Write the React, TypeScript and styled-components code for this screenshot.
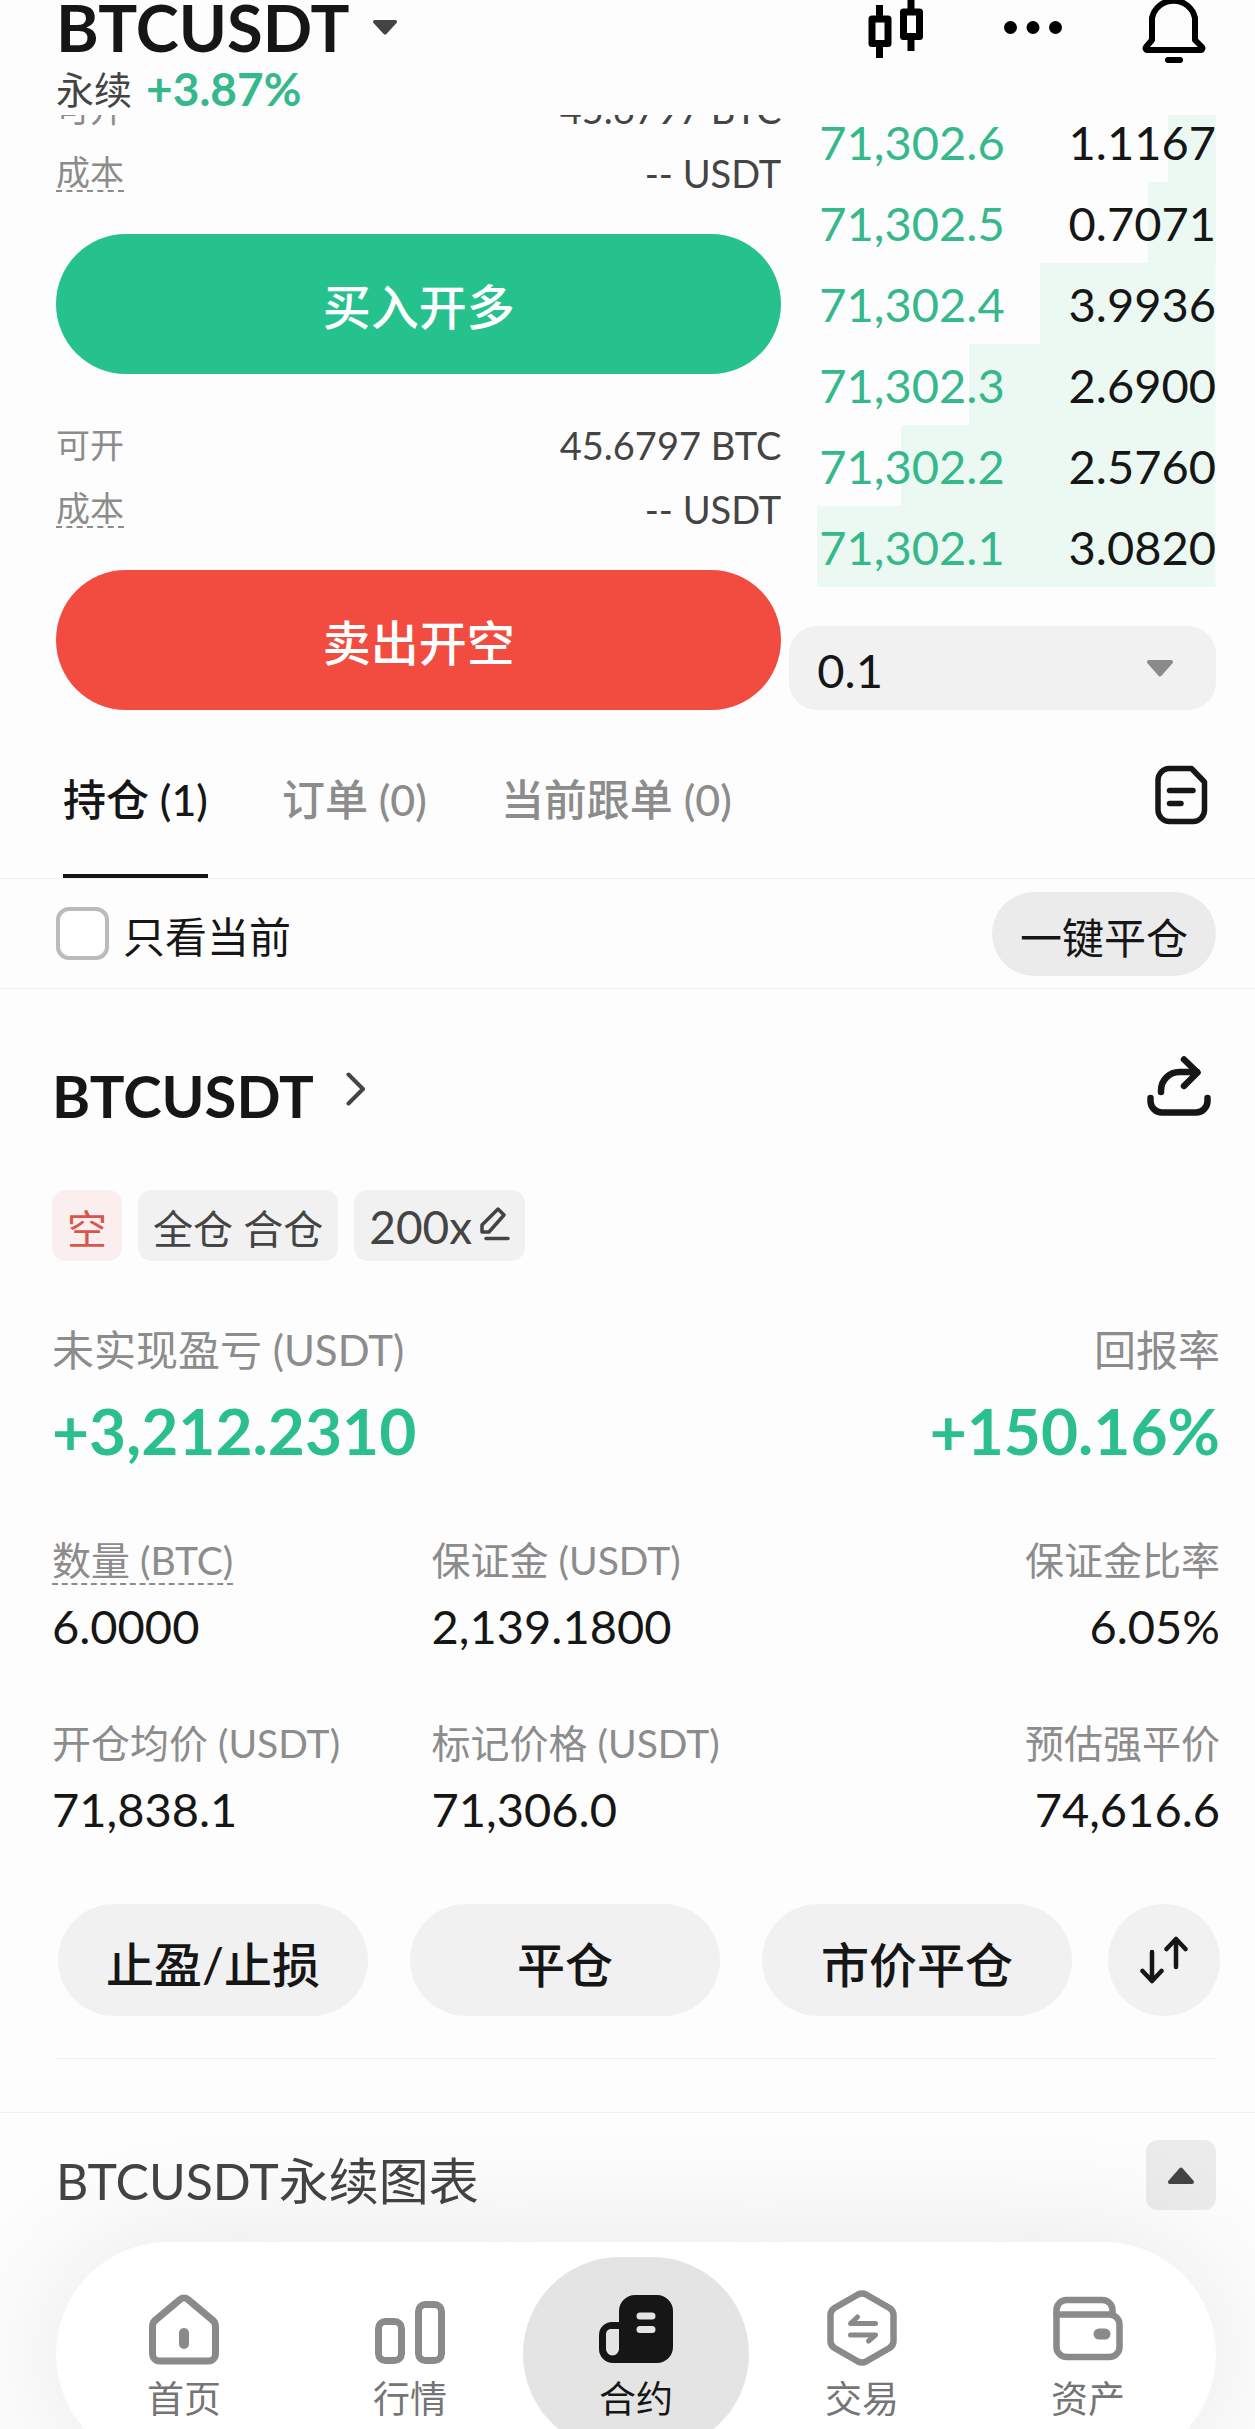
import React from 'react';
import styled, { createGlobalStyle, css } from 'styled-components';

const color = {
  page: '#fdfdfd',
  ink: '#161616',
  body: '#444444',
  muted: '#8c8c8c',
  line: '#efefef',
  fill: '#f1f1f1',
  fillStrong: '#ebebeb',
  green: '#26c28e',
  greenText: '#35b88c',
  greenBold: '#2bbe8e',
  greenWash: '#ecf9f2',
  red: '#f24c40',
  redText: '#d8564a',
  redWash: '#fbeeee',
};

const GlobalStyle = createGlobalStyle`
  *, *::before, *::after { box-sizing: border-box; }
  body { margin: 0; background: ${color.page}; }
  button, select, input { font: inherit; color: inherit; margin: 0; }
  button { border: 0; padding: 0; background: none; cursor: pointer; }
  a { color: inherit; text-decoration: none; }
  h1, h2, p, dl, dd, dt { margin: 0; font-weight: inherit; }
  svg { display: block; flex: none; }
`;

const Screen = styled.div`
  height: 100vh;
  display: flex;
  flex-direction: column;
  overflow: hidden;
  background: ${color.page};
  color: ${color.ink};
  font-family: Lato, 'Noto Sans CJK SC', sans-serif;
  font-size: 42px;
`;

/* ---------- header ---------- */

const Header = styled.header`
  flex: none;
  height: 115px;
  padding: 0 49px 0 56px;
  display: flex;
  justify-content: space-between;
  align-items: flex-start;
`;

const PairButton = styled.button`
  display: flex;
  align-items: center;
  gap: 24px;
  height: 54px;
  font-size: 65px;
  line-height: 54px;
  font-weight: 700;
`;

const PairMeta = styled.p`
  display: flex;
  gap: 14px;
  height: 61px;
  padding-top: 7px;
  font-size: 38px;
  line-height: 56px;
  color: ${color.body};
`;

const Change = styled.strong`
  font-size: 46px;
  font-weight: 700;
  color: ${color.greenText};
`;

const HeaderActions = styled.div`
  display: flex;
  align-items: flex-start;
  gap: 80px;
`;

const IconButton = styled.button`
  display: block;
  flex: none;
`;

/* ---------- scrolled content ---------- */

const Content = styled.main`
  flex: 1;
  min-height: 0;
  overflow: hidden;
`;

const Trade = styled.section`
  margin-top: -38px;
  padding: 0 39px 0 56px;
  display: grid;
  grid-template-columns: 17fr 10fr;
  gap: 8px;
`;

const OrderForm = styled.div`
  display: flex;
  flex-direction: column;
  gap: 39px;
`;

const InfoRow = styled.div`
  height: 64px;
  display: flex;
  justify-content: space-between;
  align-items: center;
  line-height: 48px;
`;

const InfoLabel = styled.span<{ $hint?: boolean }>`
  color: ${color.muted};
  font-size: 34px;
  ${(p) => p.$hint && css`border-bottom: 2px dashed ${color.muted}; line-height: 36px;`}
`;

const InfoValue = styled.span`
  color: ${color.body};
  font-size: 38px;
`;

const OrderButton = styled.button<{ $tone: string }>`
  width: 100%;
  height: 140px;
  margin-top: 29px;
  border-radius: 70px;
  background: ${(p) => p.$tone};
  color: #ffffff;
  font-size: 48px;
  font-weight: 500;
`;

const Book = styled.div`
  padding-top: 24px;
  display: flex;
  flex-direction: column;
  justify-content: space-between;
`;

const BookTable = styled.table`
  width: calc(100% - 28px);
  margin-left: 28px;
  border-collapse: collapse;
  font-size: 47px;
  line-height: 56px;
`;

const BookRow = styled.tr<{ $depth: number }>`
  height: 81px;
  background: linear-gradient(${color.greenWash}, ${color.greenWash}) right / ${(p) => p.$depth}% 100% no-repeat;
`;

const Price = styled.td`
  padding: 0 0 0 2px;
  color: ${color.greenText};
`;

const Amount = styled.td`
  padding: 0;
  text-align: right;
`;

const SelectBox = styled.div`
  display: grid;
  align-items: center;
  & > * { grid-area: 1 / 1; }
  svg { justify-self: end; margin-right: 43px; pointer-events: none; }
`;

const StepSelect = styled.select`
  appearance: none;
  width: 100%;
  height: 84px;
  padding: 4px 28px 0;
  border: 0;
  border-radius: 28px;
  background: ${color.fill};
  font-size: 47px;
`;

/* ---------- tabs and filter ---------- */

const TabBar = styled.nav`
  margin-top: 2px;
  padding: 0 47px 0 63px;
  display: flex;
  justify-content: space-between;
  align-items: center;
  border-bottom: 1px solid ${color.line};
`;

const Tabs = styled.div`
  display: flex;
  gap: 74px;
`;

const Tab = styled.button<{ $active?: boolean }>`
  height: 166px;
  padding-top: 8px;
  border-bottom: 4px solid ${(p) => (p.$active ? color.ink : 'transparent')};
  color: ${(p) => (p.$active ? color.ink : color.muted)};
  font-size: 43px;
  font-weight: 500;
`;

const FilterBar = styled.div`
  height: 110px;
  padding: 0 39px 0 56px;
  display: flex;
  justify-content: space-between;
  align-items: center;
  border-bottom: 1px solid ${color.line};
`;

const CheckLabel = styled.label`
  display: flex;
  align-items: center;
  gap: 14px;
  line-height: 56px;
`;

const CheckText = styled.span`
  padding-top: 6px;
`;

const CheckBox = styled.input`
  appearance: none;
  width: 53px;
  height: 53px;
  border: 4px solid #bbbbbb;
  border-radius: 13px;
  background: #ffffff;
  &:checked { background: ${color.ink}; }
`;

const CloseAll = styled.button`
  height: 84px;
  padding: 4px 28px 0;
  border-radius: 42px;
  background: ${color.fillStrong};
`;

/* ---------- position card ---------- */

const Position = styled.article`
  padding: 67px 35px 0 52px;
`;

const Spread = styled.div`
  display: flex;
  justify-content: space-between;
  align-items: flex-start;
`;

const PositionTitle = styled.a`
  display: flex;
  align-items: flex-start;
  gap: 32px;
  font-size: 58px;
  line-height: 80px;
  font-weight: 700;
  svg { margin-top: 16px; }
`;

const ShareButton = styled(IconButton)`
  margin-right: 9px;
`;

const Tags = styled.div`
  margin-top: 54px;
  display: flex;
  gap: 16px;
`;

const tagStyle = css`
  height: 71px;
  padding: 2px 15px 0;
  display: flex;
  align-items: center;
  border-radius: 14px;
  background: ${color.fill};
  color: ${color.body};
  font-size: 40px;
`;

const Tag = styled.span<{ $short?: boolean }>`
  ${tagStyle}
  ${(p) => p.$short && css`background: ${color.redWash}; color: ${color.redText};`}
`;

const LeverageTag = styled.button`
  ${tagStyle}
  gap: 8px;
  font-size: 46px;
  svg { margin-bottom: 6px; }
`;

const Headline = styled.dl`
  margin-top: 61px;
  display: flex;
  justify-content: space-between;
`;

const Cell = styled.div<{ $end?: boolean }>`
  text-align: ${(p) => (p.$end ? 'right' : 'left')};
`;

const HeadLabel = styled.dt`
  color: ${color.muted};
  font-size: 42px;
  line-height: 56px;
`;

const HeadValue = styled.dd`
  margin-top: 17px;
  color: ${color.greenBold};
  font-size: 64px;
  line-height: 72px;
  font-weight: 700;
`;

const Stats = styled.dl`
  margin-top: 67px;
  display: grid;
  grid-template-columns: 13fr 14fr 13fr;
  row-gap: 63px;
`;

const StatLabel = styled.dt`
  height: 52px;
  color: ${color.muted};
  font-size: 39px;
  line-height: 52px;
`;

const Hint = styled.span`
  display: inline-block;
  line-height: 46px;
  border-bottom: 2px dashed ${color.muted};
`;

const StatValue = styled.dd`
  margin-top: 12px;
  font-size: 47px;
  line-height: 56px;
`;

const Actions = styled.div`
  margin-top: 67px;
  padding-left: 6px;
  display: grid;
  grid-template-columns: 1fr 36px 112px;
`;

const ActionGroup = styled.div`
  display: flex;
  gap: 42px;
`;

const ActionButton = styled.button`
  flex: 1;
  height: 112px;
  padding-top: 4px;
  border-radius: 56px;
  background: ${color.fill};
  font-size: 48px;
  font-weight: 500;
`;

const RoundButton = styled.button`
  grid-column: 3;
  height: 112px;
  display: grid;
  place-items: center;
  border-radius: 50%;
  background: ${color.fill};
`;

const Divider = styled.hr`
  margin: 42px 4px 53px;
  border: 0;
  border-top: 1px solid ${color.line};
`;

const ChartBar = styled.section`
  height: 128px;
  padding: 27px 39px 0 56px;
  display: flex;
  justify-content: space-between;
  align-items: flex-start;
  border-top: 1px solid ${color.line};
`;

const ChartTitle = styled.h2`
  color: ${color.body};
  font-size: 50px;
  line-height: 82px;
`;

const ChartToggle = styled.button`
  width: 70px;
  height: 70px;
  display: grid;
  place-items: center;
  border-radius: 12px;
  background: ${color.fillStrong};
`;

/* ---------- bottom navigation ---------- */

const BottomNav = styled.nav`
  flex: none;
  height: 187px;
  padding: 0 39px 0 56px;
`;

const NavPill = styled.div`
  height: 224px;
  padding: 15px;
  display: grid;
  grid-template-columns: repeat(5, 1fr);
  border-radius: 112px;
  background: #ffffff;
  box-shadow: 0 0 130px rgba(0, 0, 0, 0.09);
`;

const NavItem = styled.a<{ $active?: boolean }>`
  padding-top: 33px;
  display: flex;
  flex-direction: column;
  align-items: center;
  gap: 11px;
  border-radius: 97px;
  background: ${(p) => (p.$active ? '#e4e4e4' : 'transparent')};
  color: ${(p) => (p.$active ? color.ink : '#757575')};
  font-size: 37px;
  line-height: 44px;
`;

/* ---------- icons ---------- */

const Caret = ({ w, h, fill, up }: { w: number; h: number; fill: string; up?: boolean }) => (
  <svg width={w} height={h} viewBox="0 0 26 17" preserveAspectRatio="none" fill={fill} stroke={fill} strokeWidth="4" strokeLinejoin="round" aria-hidden="true">
    <path d={up ? 'M2 15h22L13 2.5z' : 'M2 2h22L13 14.5z'} />
  </svg>
);

const CandlesIcon = () => (
  <svg width="56" height="58" viewBox="0 0 56 58" fill="none" stroke="#000" strokeWidth="7" strokeLinejoin="round" aria-hidden="true">
    <rect x="4" y="19" width="16" height="24.500" />
    <path d="M11.500 5v12M11.500 46v12M43-4v14M43 39v12" />
    <rect x="35.500" y="12" width="16" height="24.500" />
  </svg>
);

const MoreIcon = () => (
  <svg width="58" height="56" viewBox="0 0 58 56" aria-hidden="true">
    <circle cx="6.500" cy="27.500" r="6.500" />
    <circle cx="29" cy="27.500" r="6.500" />
    <circle cx="51.500" cy="27.500" r="6.500" />
  </svg>
);

const BellIcon = () => (
  <svg width="64" height="64" viewBox="0 0 64 64" fill="none" stroke="#000" strokeWidth="6" strokeLinecap="round" strokeLinejoin="round" aria-hidden="true">
    <path d="M10 40V18a22 22 0 0 1 43 0v22l7 7c1 1 0 3-1 3H5c-1 0-2-2-1-3z" />
    <path d="M26 60h12" />
  </svg>
);

const NoteIcon = () => (
  <svg width="53" height="60" viewBox="0 0 53 60" fill="none" stroke={color.ink} strokeWidth="5.500" strokeLinecap="round" strokeLinejoin="round" aria-hidden="true">
    <path d="M14 3.500h22.500L49.500 17v28a11.500 11.500 0 0 1-11.500 11.500H14.500A11.500 11.500 0 0 1 3 45V15A11.500 11.500 0 0 1 14 3.500z" />
    <path d="M14.500 25.500h23.500M14.500 38.500h11.500" />
  </svg>
);

const ChevronIcon = () => (
  <svg width="20" height="34" viewBox="0 0 20 34" fill="none" stroke={color.body} strokeWidth="4" strokeLinecap="round" strokeLinejoin="round" aria-hidden="true">
    <path d="M2.500 2.500L17 17 2.500 31.500" />
  </svg>
);

const ShareIcon = () => (
  <svg width="64" height="60" viewBox="0 0 64 60" fill="none" stroke={color.ink} strokeWidth="6.500" strokeLinecap="round" strokeLinejoin="round" aria-hidden="true">
    <path d="M3.500 42v3a11.500 11.500 0 0 0 11.500 11.500h34A11.500 11.500 0 0 0 60.500 45v-3" />
    <path d="M14 36v-1.500A18.500 18.500 0 0 1 32.500 16H50" />
    <path d="M37 3.500L50.500 16.500 37 30" />
  </svg>
);

const PencilIcon = () => (
  <svg width="30" height="34" viewBox="0 0 30 34" fill="none" stroke={color.body} strokeWidth="3.500" strokeLinecap="round" strokeLinejoin="round" aria-hidden="true">
    <path d="M2 18L18 2l6 6L9 25H2z" />
    <path d="M6 31.500h22" />
  </svg>
);

const SwapIcon = () => (
  <svg width="48" height="48" viewBox="0 0 48 48" fill="none" stroke={color.ink} strokeWidth="4.500" strokeLinecap="round" strokeLinejoin="round" aria-hidden="true">
    <path d="M12 16v29M2.500 35L12 45l9.500-10" />
    <path d="M36 31V3M26.500 13L36 3l9.500 10" />
  </svg>
);

const HomeIcon = () => (
  <svg width="70" height="76" viewBox="0 0 70 76" fill="none" stroke="#8a8a8a" strokeWidth="7" strokeLinecap="round" strokeLinejoin="round" aria-hidden="true">
    <path d="M31 9.500a6 6 0 0 1 8 0l25 21q2.500 2.500 2.500 6V64a7 7 0 0 1-7 7h-49a7 7 0 0 1-7-7V36.500q0-3.500 2.500-6z" />
    <path d="M35 43v11" strokeWidth="10" />
  </svg>
);

const MarketIcon = () => (
  <svg width="70" height="76" viewBox="0 0 70 76" fill="none" stroke="#8a8a8a" strokeWidth="7" aria-hidden="true">
    <rect x="3.500" y="31.500" width="23" height="39" rx="7" />
    <rect x="43.500" y="14.500" width="23" height="56" rx="7" />
  </svg>
);

const ContractIcon = () => (
  <svg width="74" height="76" viewBox="0 0 74 76" aria-hidden="true">
    <path fill={color.ink} d="M36 5h22a16 16 0 0 1 16 16v36a16 16 0 0 1-16 16H14A14 14 0 0 1 0 59V45a13 13 0 0 1 13-13h7V21A16 16 0 0 1 36 5z" />
    <path fill="#e4e4e4" d="M12 39h8v20a6.500 6.500 0 0 1-13 0V44a5 5 0 0 1 5-5z" />
    <path stroke="#e4e4e4" strokeWidth="7" strokeLinecap="round" d="M41 26h12M41 39.500h12" />
  </svg>
);

const TradeIcon = () => (
  <svg width="70" height="76" viewBox="0 0 70 76" fill="none" stroke="#8a8a8a" strokeWidth="6.500" strokeLinecap="round" strokeLinejoin="round" aria-hidden="true">
    <path d="M31 4.500q4-2 8 0l23.500 13.500q4 2.500 4 7v26q0 4.500-4 7L39 71.500q-4 2-8 0L7.500 58q-4-2.500-4-7V25q0-4.500 4-7z" />
    <path strokeWidth="5" d="M30.500 27L23.500 33.500h25M23.500 45h25L41.500 51" />
  </svg>
);

const WalletIcon = () => (
  <svg width="70" height="76" viewBox="0 0 70 76" fill="none" stroke="#8a8a8a" strokeWidth="6.500" strokeLinecap="round" strokeLinejoin="round" aria-hidden="true">
    <path d="M3.500 25V20A10 10 0 0 1 13.500 10h36A10 10 0 0 1 59.500 20v5" />
    <path d="M3.500 24.500h53a10 10 0 0 1 10 10V57a10 10 0 0 1-10 10h-43a10 10 0 0 1-10-10z" />
    <path strokeWidth="11" d="M46 44h6" />
  </svg>
);

/* ---------- data ---------- */

const bids = [
  { price: '71,302.6', amount: '1.1167', depth: 12 },
  { price: '71,302.5', amount: '0.7071', depth: 17 },
  { price: '71,302.4', amount: '3.9936', depth: 44 },
  { price: '71,302.3', amount: '2.6900', depth: 62 },
  { price: '71,302.2', amount: '2.5760', depth: 79 },
  { price: '71,302.1', amount: '3.0820', depth: 100 },
];

const stats = [
  { label: '数量 (BTC)', value: '6.0000', hint: true },
  { label: '保证金 (USDT)', value: '2,139.1800' },
  { label: '保证金比率', value: '6.05%' },
  { label: '开仓均价 (USDT)', value: '71,838.1' },
  { label: '标记价格 (USDT)', value: '71,306.0' },
  { label: '预估强平价', value: '74,616.6' },
];

const navItems = [
  { label: '首页', Icon: HomeIcon },
  { label: '行情', Icon: MarketIcon },
  { label: '合约', Icon: ContractIcon, active: true },
  { label: '交易', Icon: TradeIcon },
  { label: '资产', Icon: WalletIcon },
];

const OrderSide = ({ text, tone }: { text: string; tone: string }) => (
  <div>
    <InfoRow>
      <InfoLabel>可开</InfoLabel>
      <InfoValue>45.6797 BTC</InfoValue>
    </InfoRow>
    <InfoRow>
      <InfoLabel $hint>成本</InfoLabel>
      <InfoValue>-- USDT</InfoValue>
    </InfoRow>
    <OrderButton type="button" $tone={tone}>{text}</OrderButton>
  </div>
);

export default function App() {
  return (
    <Screen lang="zh-CN">
      <GlobalStyle />
      <Header>
        <div>
          <h1>
            <PairButton type="button">
              BTCUSDT
              <Caret w={24} h={15} fill={color.body} />
            </PairButton>
          </h1>
          <PairMeta>
            永续 <Change>+3.87%</Change>
          </PairMeta>
        </div>
        <HeaderActions>
          <IconButton type="button" aria-label="K线"><CandlesIcon /></IconButton>
          <IconButton type="button" aria-label="更多"><MoreIcon /></IconButton>
          <IconButton type="button" aria-label="提醒"><BellIcon /></IconButton>
        </HeaderActions>
      </Header>

      <Content>
        <Trade>
          <OrderForm>
            <OrderSide text="买入开多" tone={color.green} />
            <OrderSide text="卖出开空" tone={color.red} />
          </OrderForm>
          <Book>
            <BookTable>
              <tbody>
                {bids.map((b) => (
                  <BookRow key={b.price} $depth={b.depth}>
                    <Price>{b.price}</Price>
                    <Amount>{b.amount}</Amount>
                  </BookRow>
                ))}
              </tbody>
            </BookTable>
            <SelectBox>
              <StepSelect aria-label="价格精度" defaultValue="0.1">
                <option>0.1</option>
                <option>1</option>
                <option>10</option>
              </StepSelect>
              <Caret w={26} h={17} fill="#8a8a8a" />
            </SelectBox>
          </Book>
        </Trade>

        <TabBar>
          <Tabs>
            <Tab type="button" $active>持仓 (1)</Tab>
            <Tab type="button">订单 (0)</Tab>
            <Tab type="button">当前跟单 (0)</Tab>
          </Tabs>
          <IconButton type="button" aria-label="历史记录"><NoteIcon /></IconButton>
        </TabBar>

        <FilterBar>
          <CheckLabel>
            <CheckBox type="checkbox" />
            <CheckText>只看当前</CheckText>
          </CheckLabel>
          <CloseAll type="button">一键平仓</CloseAll>
        </FilterBar>

        <Position>
          <Spread>
            <PositionTitle href="#position">
              BTCUSDT
              <ChevronIcon />
            </PositionTitle>
            <ShareButton type="button" aria-label="分享"><ShareIcon /></ShareButton>
          </Spread>
          <Tags>
            <Tag $short>空</Tag>
            <Tag>全仓 合仓</Tag>
            <LeverageTag type="button">200x<PencilIcon /></LeverageTag>
          </Tags>
          <Headline>
            <Cell>
              <HeadLabel>未实现盈亏 (USDT)</HeadLabel>
              <HeadValue>+3,212.2310</HeadValue>
            </Cell>
            <Cell $end>
              <HeadLabel>回报率</HeadLabel>
              <HeadValue>+150.16%</HeadValue>
            </Cell>
          </Headline>
          <Stats>
            {stats.map((s, i) => (
              <Cell key={s.label} $end={i % 3 === 2}>
                <StatLabel>{s.hint ? <Hint>{s.label}</Hint> : s.label}</StatLabel>
                <StatValue>{s.value}</StatValue>
              </Cell>
            ))}
          </Stats>
          <Actions>
            <ActionGroup>
              <ActionButton type="button">止盈/止损</ActionButton>
              <ActionButton type="button">平仓</ActionButton>
              <ActionButton type="button">市价平仓</ActionButton>
            </ActionGroup>
            <RoundButton type="button" aria-label="反手"><SwapIcon /></RoundButton>
          </Actions>
          <Divider />
        </Position>

        <ChartBar>
          <ChartTitle>BTCUSDT永续图表</ChartTitle>
          <ChartToggle type="button" aria-label="展开图表">
            <Caret w={26} h={17} fill={color.body} up />
          </ChartToggle>
        </ChartBar>
      </Content>

      <BottomNav>
        <NavPill>
          {navItems.map(({ label, Icon, active }) => (
            <NavItem key={label} href="#nav" $active={active} aria-current={active ? 'page' : undefined}>
              <Icon />
              {label}
            </NavItem>
          ))}
        </NavPill>
      </BottomNav>
    </Screen>
  );
}
